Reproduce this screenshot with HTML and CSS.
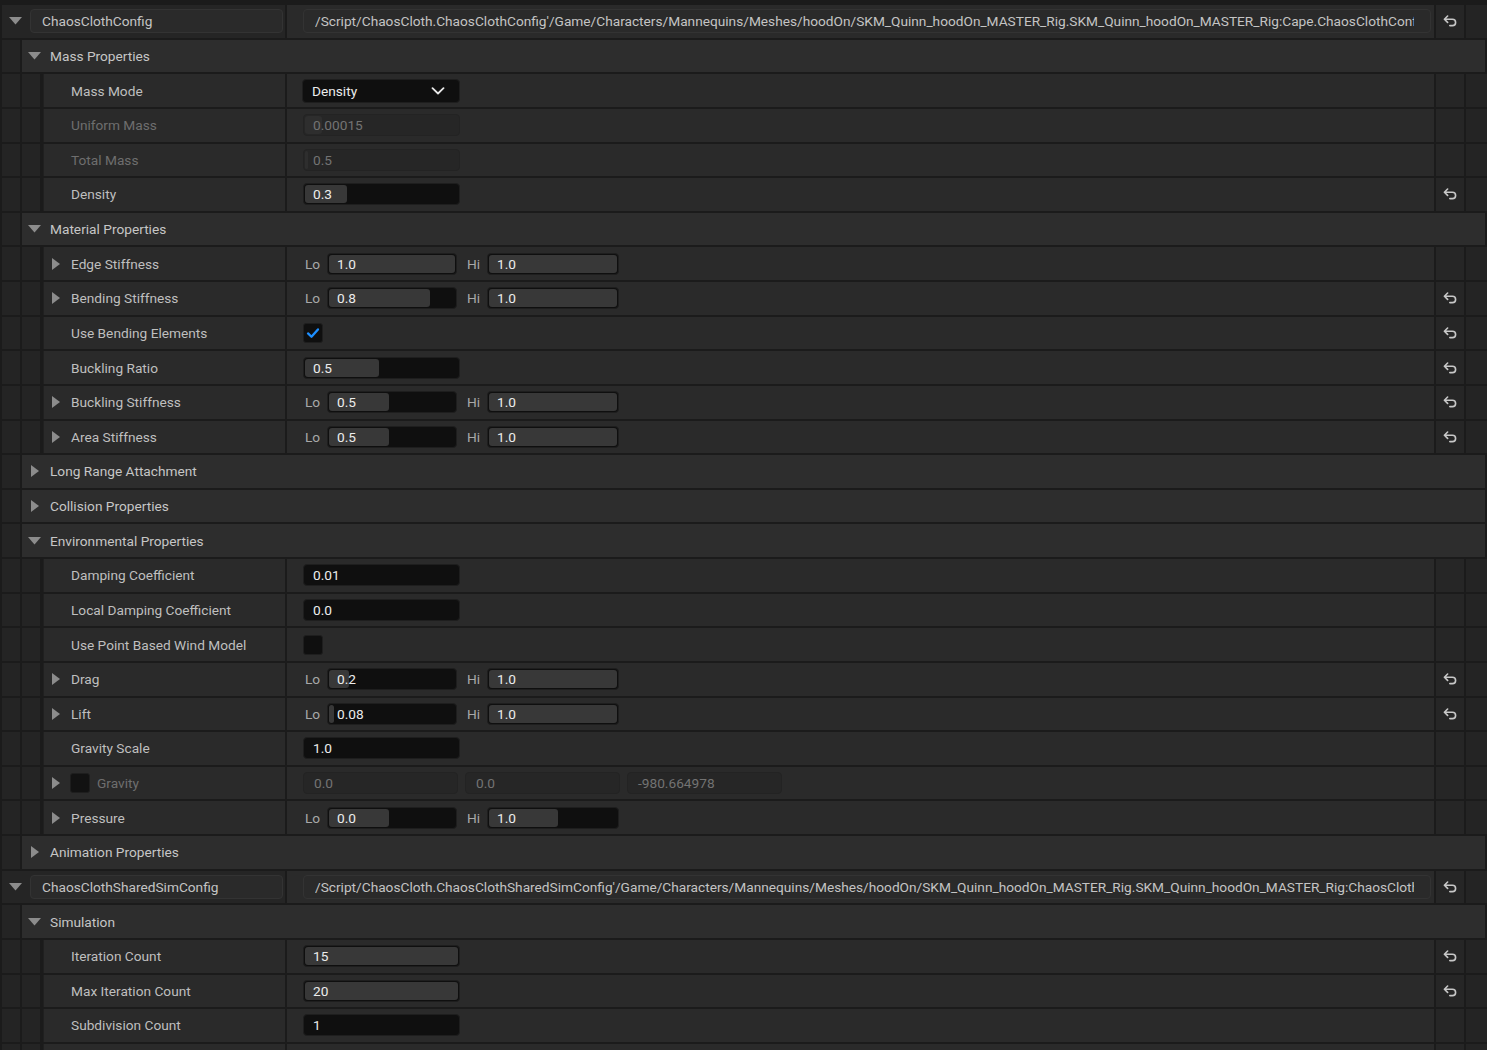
FILE: index.html
```html
<!DOCTYPE html>
<html lang="en">
<head>
  <meta charset="UTF-8" />
  <title>Details - Cloth Config</title>
  <link rel="stylesheet" href="styles.css">
</head>
<body>
  <svg width="0" height="0" class="defs">
    <symbol id="reset" viewBox="0 0 14 12">
      <path d="M4.6 1 L1.4 4.2 L4.6 7.4 M1.6 4.2 H9.4 a3.2 3.2 0 0 1 0 6.4 H6.8" fill="none" stroke="currentColor" stroke-width="1.6" stroke-linecap="round" stroke-linejoin="round"/>
    </symbol>
    <symbol id="tri-down" viewBox="0 0 13 8">
      <path d="M0 0 H13 L6.5 7.5 Z" fill="currentColor"/>
    </symbol>
    <symbol id="tri-right" viewBox="0 0 8 12">
      <path d="M0 0 L8 6 L0 12 Z" fill="currentColor"/>
    </symbol>
  </svg>

  <div class="panel">

    <div class="row obj">
      <div class="obj-name"><svg class="tri-obj"><use href="#tri-down"/></svg><div class="field name-field">ChaosClothConfig</div></div>
      <div class="val obj-val"><div class="field path-field"><span class="path-text">/Script/ChaosCloth.ChaosClothConfig'/Game/Characters/Mannequins/Meshes/hoodOn/SKM_Quinn_hoodOn_MASTER_Rig.SKM_Quinn_hoodOn_MASTER_Rig:Cape.ChaosClothConfig'</span></div></div>
      <div class="reset"><svg><use href="#reset"/></svg></div>
      <div class="edge"></div>
    </div>

    <div class="row cat">
      <div class="ind"></div>
      <div class="cat-body"><svg class="tri-cat-down"><use href="#tri-down"/></svg>Mass Properties</div>
    </div>

    <div class="row prop">
      <div class="ind"></div><div class="ind"></div>
      <div class="name">Mass Mode</div>
      <div class="val">
        <div class="combo">Density<svg class="chev" viewBox="0 0 14 8"><path d="M1.5 1.2 L7 6.5 L12.5 1.2" fill="none" stroke="currentColor" stroke-width="1.8" stroke-linecap="round" stroke-linejoin="round"/></svg></div>
      </div>
      <div class="reset"></div>
      <div class="edge"></div>
    </div>

    <div class="row prop">
      <div class="ind"></div><div class="ind"></div>
      <div class="name off">Uniform Mass</div>
      <div class="val"><div class="num wide off"><span class="fill" style="width: 11%"></span><span class="txt">0.00015</span></div></div>
      <div class="reset"></div>
      <div class="edge"></div>
    </div>

    <div class="row prop">
      <div class="ind"></div><div class="ind"></div>
      <div class="name off">Total Mass</div>
      <div class="val"><div class="num wide off"><span class="fill" style="width: 2%"></span><span class="txt">0.5</span></div></div>
      <div class="reset"></div>
      <div class="edge"></div>
    </div>

    <div class="row prop">
      <div class="ind"></div><div class="ind"></div>
      <div class="name">Density</div>
      <div class="val"><div class="num wide"><span class="fill" style="width: 27%"></span><span class="txt">0.3</span></div></div>
      <div class="reset"><svg><use href="#reset"/></svg></div>
      <div class="edge"></div>
    </div>

    <div class="row cat">
      <div class="ind"></div>
      <div class="cat-body"><svg class="tri-cat-down"><use href="#tri-down"/></svg>Material Properties</div>
    </div>

    <div class="row prop">
      <div class="ind"></div><div class="ind"></div>
      <div class="name"><svg class="tri-prop"><use href="#tri-right"/></svg>Edge Stiffness</div>
      <div class="val">
        <span class="lo">Lo</span><div class="num lo-box"><span class="fill" style="width: 100%"></span><span class="txt">1.0</span></div>
        <span class="hi">Hi</span><div class="num hi-box"><span class="fill" style="width: 100%"></span><span class="txt">1.0</span></div>
      </div>
      <div class="reset"></div>
      <div class="edge"></div>
    </div>

    <div class="row prop">
      <div class="ind"></div><div class="ind"></div>
      <div class="name"><svg class="tri-prop"><use href="#tri-right"/></svg>Bending Stiffness</div>
      <div class="val">
        <span class="lo">Lo</span><div class="num lo-box"><span class="fill" style="width: 79%"></span><span class="txt">0.8</span></div>
        <span class="hi">Hi</span><div class="num hi-box"><span class="fill" style="width: 100%"></span><span class="txt">1.0</span></div>
      </div>
      <div class="reset"><svg><use href="#reset"/></svg></div>
      <div class="edge"></div>
    </div>

    <div class="row prop">
      <div class="ind"></div><div class="ind"></div>
      <div class="name">Use Bending Elements</div>
      <div class="val"><div class="check"><svg viewBox="0 0 20 20"><path d="M4.5 10.5 L8.3 14.2 L15.5 6" fill="none" stroke="#1d8fff" stroke-width="2.6" stroke-linecap="round" stroke-linejoin="round"/></svg></div></div>
      <div class="reset"><svg><use href="#reset"/></svg></div>
      <div class="edge"></div>
    </div>

    <div class="row prop">
      <div class="ind"></div><div class="ind"></div>
      <div class="name">Buckling Ratio</div>
      <div class="val"><div class="num wide"><span class="fill" style="width: 48%"></span><span class="txt">0.5</span></div></div>
      <div class="reset"><svg><use href="#reset"/></svg></div>
      <div class="edge"></div>
    </div>

    <div class="row prop">
      <div class="ind"></div><div class="ind"></div>
      <div class="name"><svg class="tri-prop"><use href="#tri-right"/></svg>Buckling Stiffness</div>
      <div class="val">
        <span class="lo">Lo</span><div class="num lo-box"><span class="fill" style="width: 47%"></span><span class="txt">0.5</span></div>
        <span class="hi">Hi</span><div class="num hi-box"><span class="fill" style="width: 100%"></span><span class="txt">1.0</span></div>
      </div>
      <div class="reset"><svg><use href="#reset"/></svg></div>
      <div class="edge"></div>
    </div>

    <div class="row prop">
      <div class="ind"></div><div class="ind"></div>
      <div class="name"><svg class="tri-prop"><use href="#tri-right"/></svg>Area Stiffness</div>
      <div class="val">
        <span class="lo">Lo</span><div class="num lo-box"><span class="fill" style="width: 47%"></span><span class="txt">0.5</span></div>
        <span class="hi">Hi</span><div class="num hi-box"><span class="fill" style="width: 100%"></span><span class="txt">1.0</span></div>
      </div>
      <div class="reset"><svg><use href="#reset"/></svg></div>
      <div class="edge"></div>
    </div>

    <div class="row cat">
      <div class="ind"></div>
      <div class="cat-body"><svg class="tri-cat-right"><use href="#tri-right"/></svg>Long Range Attachment</div>
    </div>

    <div class="row cat">
      <div class="ind"></div>
      <div class="cat-body"><svg class="tri-cat-right"><use href="#tri-right"/></svg>Collision Properties</div>
    </div>

    <div class="row cat">
      <div class="ind"></div>
      <div class="cat-body"><svg class="tri-cat-down"><use href="#tri-down"/></svg>Environmental Properties</div>
    </div>

    <div class="row prop">
      <div class="ind"></div><div class="ind"></div>
      <div class="name">Damping Coefficient</div>
      <div class="val"><div class="num wide"><span class="fill" style="width: 0%"></span><span class="txt">0.01</span></div></div>
      <div class="reset"></div>
      <div class="edge"></div>
    </div>

    <div class="row prop">
      <div class="ind"></div><div class="ind"></div>
      <div class="name">Local Damping Coefficient</div>
      <div class="val"><div class="num wide"><span class="fill" style="width: 0%"></span><span class="txt">0.0</span></div></div>
      <div class="reset"></div>
      <div class="edge"></div>
    </div>

    <div class="row prop">
      <div class="ind"></div><div class="ind"></div>
      <div class="name">Use Point Based Wind Model</div>
      <div class="val"><div class="check"></div></div>
      <div class="reset"></div>
      <div class="edge"></div>
    </div>

    <div class="row prop">
      <div class="ind"></div><div class="ind"></div>
      <div class="name"><svg class="tri-prop"><use href="#tri-right"/></svg>Drag</div>
      <div class="val">
        <span class="lo">Lo</span><div class="num lo-box"><span class="fill" style="width: 16%"></span><span class="txt">0.2</span></div>
        <span class="hi">Hi</span><div class="num hi-box"><span class="fill" style="width: 100%"></span><span class="txt">1.0</span></div>
      </div>
      <div class="reset"><svg><use href="#reset"/></svg></div>
      <div class="edge"></div>
    </div>

    <div class="row prop">
      <div class="ind"></div><div class="ind"></div>
      <div class="name"><svg class="tri-prop"><use href="#tri-right"/></svg>Lift</div>
      <div class="val">
        <span class="lo">Lo</span><div class="num lo-box"><span class="fill" style="width: 4%"></span><span class="txt">0.08</span></div>
        <span class="hi">Hi</span><div class="num hi-box"><span class="fill" style="width: 100%"></span><span class="txt">1.0</span></div>
      </div>
      <div class="reset"><svg><use href="#reset"/></svg></div>
      <div class="edge"></div>
    </div>

    <div class="row prop">
      <div class="ind"></div><div class="ind"></div>
      <div class="name">Gravity Scale</div>
      <div class="val"><div class="num wide"><span class="fill" style="width: 0%"></span><span class="txt">1.0</span></div></div>
      <div class="reset"></div>
      <div class="edge"></div>
    </div>

    <div class="row prop">
      <div class="ind"></div><div class="ind"></div>
      <div class="name off"><svg class="tri-prop"><use href="#tri-right"/></svg><span class="check small"></span>Gravity</div>
      <div class="val vec">
        <div class="num vec-box off"><span class="txt">0.0</span></div>
        <div class="num vec-box off"><span class="txt">0.0</span></div>
        <div class="num vec-box off"><span class="txt">-980.664978</span></div>
      </div>
      <div class="reset"></div>
      <div class="edge"></div>
    </div>

    <div class="row prop">
      <div class="ind"></div><div class="ind"></div>
      <div class="name"><svg class="tri-prop"><use href="#tri-right"/></svg>Pressure</div>
      <div class="val">
        <span class="lo">Lo</span><div class="num lo-box"><span class="fill" style="width: 47%"></span><span class="txt">0.0</span></div>
        <span class="hi">Hi</span><div class="num hi-box"><span class="fill" style="width: 53%"></span><span class="txt">1.0</span></div>
      </div>
      <div class="reset"></div>
      <div class="edge"></div>
    </div>

    <div class="row cat">
      <div class="ind"></div>
      <div class="cat-body"><svg class="tri-cat-right"><use href="#tri-right"/></svg>Animation Properties</div>
    </div>

    <div class="row obj">
      <div class="obj-name"><svg class="tri-obj"><use href="#tri-down"/></svg><div class="field name-field">ChaosClothSharedSimConfig</div></div>
      <div class="val obj-val"><div class="field path-field"><span class="path-text">/Script/ChaosCloth.ChaosClothSharedSimConfig'/Game/Characters/Mannequins/Meshes/hoodOn/SKM_Quinn_hoodOn_MASTER_Rig.SKM_Quinn_hoodOn_MASTER_Rig:ChaosClothSharedSimConfig'</span></div></div>
      <div class="reset"><svg><use href="#reset"/></svg></div>
      <div class="edge"></div>
    </div>

    <div class="row cat">
      <div class="ind"></div>
      <div class="cat-body"><svg class="tri-cat-down"><use href="#tri-down"/></svg>Simulation</div>
    </div>

    <div class="row prop">
      <div class="ind"></div><div class="ind"></div>
      <div class="name">Iteration Count</div>
      <div class="val"><div class="num wide"><span class="fill" style="width: 100%"></span><span class="txt">15</span></div></div>
      <div class="reset"><svg><use href="#reset"/></svg></div>
      <div class="edge"></div>
    </div>

    <div class="row prop">
      <div class="ind"></div><div class="ind"></div>
      <div class="name">Max Iteration Count</div>
      <div class="val"><div class="num wide"><span class="fill" style="width: 100%"></span><span class="txt">20</span></div></div>
      <div class="reset"><svg><use href="#reset"/></svg></div>
      <div class="edge"></div>
    </div>

    <div class="row prop">
      <div class="ind"></div><div class="ind"></div>
      <div class="name">Subdivision Count</div>
      <div class="val"><div class="num wide"><span class="fill" style="width: 0%"></span><span class="txt">1</span></div></div>
      <div class="reset"></div>
      <div class="edge"></div>
    </div>

    <div class="row prop">
      <div class="ind"></div><div class="ind"></div>
      <div class="name"></div>
      <div class="val"></div>
      <div class="reset"></div>
      <div class="edge"></div>
    </div>

  </div>
</body>
</html>
```

FILE: styles.css
```css
body {
  margin: 0;
  background: #1b1b1b;
  font-family: Roboto, "Noto Sans", sans-serif;
  font-size: 13.7px;
  color: #bfbfbf;
  overflow: hidden;
}
.defs {
  position: absolute;
}
.panel {
  display: flex;
  flex-direction: column;
  gap: 2px;
  padding-top: 5px;
  width: 1487px;
}
.row {
  display: flex;
  gap: 2px;
  height: 32.64px;
  flex-shrink: 0;
}
.ind {
  width: 18px;
  background: #242424;
}
.row.prop,
.row.cat {
  padding-left: 2px;
}

/* object header rows */
.obj-name {
  width: 283px;
  margin-left: 2px;
  display: flex;
  align-items: center;
  background: #252525;
}
.tri-obj {
  width: 13px;
  height: 8px;
  margin: 0 8px 0 7px;
  color: #8c8c8c;
}
.field {
  height: 24px;
  box-sizing: border-box;
  border: 1px solid #333;
  border-radius: 4px;
  background: #2a2a2a;
  display: flex;
  align-items: center;
  padding-left: 11px;
  color: #c4c4c4;
  white-space: nowrap;
  overflow: hidden;
}
.name-field {
  width: 253px;
}
.obj-val {
  background: #252525;
  padding-left: 15px;
}
.path-field {
  width: 1128px;
  padding-right: 16px;
}
.path-text {
  min-width: 0;
  overflow: hidden;
  white-space: nowrap;
}

/* category rows */
.cat-body {
  width: 1463px;
  background: #2d2d2d;
  display: flex;
  align-items: center;
  color: #c6c6c6;
}
.tri-cat-down {
  width: 13px;
  height: 8px;
  margin: 0 9px 0 6px;
  color: #8c8c8c;
}
.tri-cat-right {
  width: 8px;
  height: 12px;
  margin: 0 11px 0 9px;
  color: #8c8c8c;
}

/* property rows */
.name {
  width: 242px;
  margin-left: 1px;
  background: #2a2a2a;
  display: flex;
  align-items: center;
  padding-left: 28px;
  box-sizing: border-box;
  box-shadow: inset 1px 0 #202020;
}
.name.off {
  color: #6e6e6e;
}
.tri-prop {
  width: 8px;
  height: 12px;
  margin-left: -19px;
  margin-right: 11px;
  color: #8c8c8c;
}
.val {
  width: 1147px;
  background: #2a2a2a;
  display: flex;
  align-items: center;
  padding-left: 16px;
  box-sizing: border-box;
}
.reset {
  width: 28px;
  background: #262626;
  display: flex;
  align-items: center;
  justify-content: center;
  color: #c8c8c8;
}
.reset svg {
  width: 14px;
  height: 12px;
}
.edge {
  width: 21px;
  background: #242424;
}

/* value widgets */
.num {
  position: relative;
  height: 22px;
  box-sizing: border-box;
  border: 1px solid #1e1e1e;
  border-radius: 4px;
  background: #0f0f0f;
  color: #ececec;
  display: flex;
  align-items: center;
  overflow: hidden;
}
.num .fill {
  position: absolute;
  left: 1px;
  top: 1px;
  bottom: 1px;
  max-width: calc(100% - 2px);
  border-radius: 3px;
  background: #383838;
}
.num .txt {
  position: relative;
  padding-left: 9px;
}
.num.wide {
  width: 157px;
}
.num.off {
  background: #262626;
  border-color: #232323;
  color: #737373;
}
.num.off .fill {
  background: #2e2e2e;
}
.lo {
  width: 22px;
  padding-left: 2px;
  color: #a8a8a8;
}
.hi {
  width: 20px;
  margin-left: 10px;
  color: #a8a8a8;
}
.lo-box {
  width: 130px;
}
.hi-box {
  width: 132px;
}
.vec {
  gap: 7px;
}
.vec-box {
  width: 155px;
}
.vec-box .txt {
  padding-left: 10px;
}
.combo {
  width: 158px;
  height: 24px;
  margin-left: -1px;
  box-sizing: border-box;
  border-radius: 4px;
  background: #0f0f0f;
  border: 1px solid #1e1e1e;
  color: #ececec;
  display: flex;
  align-items: center;
  padding-left: 9px;
}
.chev {
  width: 14px;
  height: 8px;
  margin-left: auto;
  margin-right: 14px;
  color: #e8e8e8;
}
.check {
  width: 20px;
  height: 20px;
  box-sizing: border-box;
  border: 1px solid #1e1e1e;
  border-radius: 3px;
  background: #0f0f0f;
  display: flex;
}
.check svg {
  width: 18px;
  height: 18px;
}
.check.small {
  margin-right: 7px;
  margin-left: -1px;
  background: #121212;
}
```
